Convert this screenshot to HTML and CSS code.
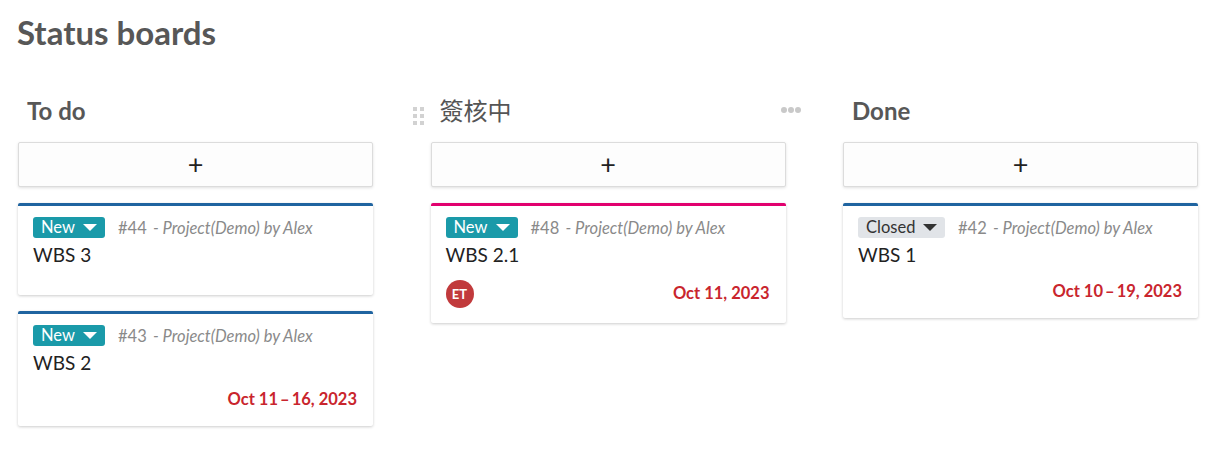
FILE: index.html
```html
<!DOCTYPE html>
<html lang="en">
<head>
<meta charset="utf-8">
<title>Status boards</title>
<link rel="stylesheet" href="styles.css">
</head>
<body>
<div class="page">
  <h1 class="page-title">Status boards</h1>
  <div class="board">
    <section class="column">
      <header class="column-head">
        <h2 class="column-title">To do</h2>
      </header>
      <button class="add-btn" type="button">+</button>
      <div class="cards">
        <article class="card card-blue">
          <div class="card-head">
            <span class="status status-new">New<span class="caret"></span></span>
            <span class="meta"><span class="num">#44</span> <em>- Project(Demo) by Alex</em></span>
          </div>
          <div class="subject">WBS 3</div>
          <div class="card-foot"></div>
        </article>
        <article class="card card-blue">
          <div class="card-head">
            <span class="status status-new">New<span class="caret"></span></span>
            <span class="meta"><span class="num">#43</span> <em>- Project(Demo) by Alex</em></span>
          </div>
          <div class="subject">WBS 2</div>
          <div class="card-foot"><span class="date">Oct 11&#8201;–&#8201;16, 2023</span></div>
        </article>
      </div>
    </section>

    <section class="column">
      <header class="column-head">
        <span class="drag-handle" aria-hidden="true">
          <i></i><i></i><i></i><i></i><i></i><i></i>
        </span>
        <h2 class="column-title cjk">簽核中</h2>
        <span class="more" aria-hidden="true"><i></i><i></i><i></i></span>
      </header>
      <button class="add-btn" type="button">+</button>
      <div class="cards">
        <article class="card card-pink">
          <div class="card-head">
            <span class="status status-new">New<span class="caret"></span></span>
            <span class="meta"><span class="num">#48</span> <em>- Project(Demo) by Alex</em></span>
          </div>
          <div class="subject">WBS 2.1</div>
          <div class="card-foot">
            <span class="avatar">ET</span>
            <span class="date">Oct 11, 2023</span>
          </div>
        </article>
      </div>
    </section>

    <section class="column">
      <header class="column-head">
        <h2 class="column-title">Done</h2>
      </header>
      <button class="add-btn" type="button">+</button>
      <div class="cards">
        <article class="card card-blue">
          <div class="card-head">
            <span class="status status-closed">Closed<span class="caret"></span></span>
            <span class="meta"><span class="num">#42</span> <em>- Project(Demo) by Alex</em></span>
          </div>
          <div class="subject">WBS 1</div>
          <div class="card-foot"><span class="date">Oct 10&#8201;–&#8201;19, 2023</span></div>
        </article>
      </div>
    </section>
  </div>
</div>
</body>
</html>
```

FILE: styles.css
```css
* { box-sizing: border-box; }

html, body {
  margin: 0;
  background: #ffffff;
}

body {
  font-family: Lato, "Noto Sans CJK TC", "Noto Sans", sans-serif;
  color: #333;
}

.page {
  padding: 0 18px 20px;
}

.page-title {
  margin: 13px 0 0 -1px;
  font-size: 33px;
  line-height: 39px;
  font-weight: 700;
  color: #575757;
}

.board {
  display: grid;
  grid-template-columns: repeat(3, 355px);
  column-gap: 57.5px;
  margin-top: 44px;
  align-items: start;
}

.column {
  display: flex;
  flex-direction: column;
}

.column-head {
  position: relative;
  height: 29px;
  padding-left: 9px;
  display: flex;
  align-items: center;
}

.column-title {
  margin: 0;
  font-size: 24px;
  line-height: 29px;
  font-weight: 700;
  color: #575757;
}

.column-title.cjk {
  font-weight: 400;
  font-size: 24px;
  color: #555;
}

.drag-handle {
  position: absolute;
  left: -18px;
  top: 11px;
  display: grid;
  grid-template-columns: 4px 4px;
  grid-auto-rows: 4px;
  gap: 3px 3px;
}

.drag-handle i {
  display: block;
  background: #d2d2d2;
}

.more {
  position: absolute;
  right: -15px;
  top: 11px;
  display: flex;
  gap: 1px;
}

.more i {
  display: block;
  width: 6px;
  height: 6px;
  border-radius: 50%;
  background: #c9c9c9;
}

.add-btn {
  margin-top: 16.5px;
  height: 45px;
  width: 100%;
  border: 1px solid #dcdcdc;
  border-radius: 2px;
  background: #fdfdfd;
  box-shadow: 0 1px 3px rgba(0, 0, 0, 0.12);
  font-family: Lato, sans-serif;
  font-size: 27px;
  font-weight: 400;
  line-height: 1;
  color: #222;
  padding: 0 0 2px;
}

.cards {
  display: flex;
  flex-direction: column;
  gap: 16px;
  margin-top: 16px;
}

.card {
  background: #fff;
  border-top: 3px solid #1f64a0;
  border-radius: 2px;
  box-shadow: 0 1px 3px rgba(0, 0, 0, 0.2);
  padding: 11px 15px 15px;
}

.card-blue { border-top-color: #1f64a0; }
.card-pink { border-top-color: #e1006e; }

.card-head {
  display: flex;
  align-items: center;
  height: 22px;
  gap: 13px;
}

.status {
  display: inline-flex;
  align-items: center;
  height: 21px;
  padding: 0 8px;
  border-radius: 3px;
  font-size: 16.5px;
  line-height: 21px;
}

.status-new {
  width: 72px;
  background: #1a9aa9;
  color: #fff;
}

.status-closed {
  width: 87px;
  background: #e1e4e8;
  color: #333;
}

.caret {
  margin-left: auto;
  width: 0;
  height: 0;
  border-left: 7px solid transparent;
  border-right: 7px solid transparent;
  border-top: 7px solid currentColor;
}

.status-closed .caret {
  border-top-color: #333;
}

.meta {
  font-size: 16.5px;
  color: #8a8a8a;
  white-space: nowrap;
}

.meta em {
  font-style: italic;
  padding-left: 2px;
}

.subject {
  padding-top: 3px;
  font-size: 19px;
  line-height: 26px;
  color: #222;
}

.card-foot {
  display: flex;
  align-items: center;
  margin-top: 12px;
}

.card-foot:empty {
  height: 0;
}

.date {
  margin-left: auto;
  font-size: 16.5px;
  font-weight: 700;
  line-height: 23px;
  color: #c9252d;
  padding-right: 1px;
}

.avatar {
  width: 28px;
  height: 28px;
  border-radius: 50%;
  background: #c13a3c;
  color: #fff;
  font-size: 13px;
  font-weight: 700;
  display: inline-flex;
  align-items: center;
  justify-content: center;
}
```
